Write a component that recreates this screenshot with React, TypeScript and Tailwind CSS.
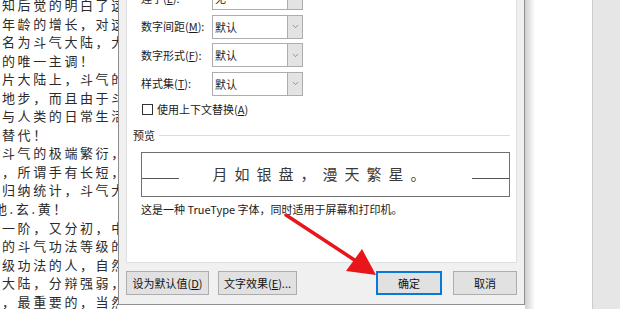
import { ChevronDown } from 'lucide-react';

const novelLines = [
  '知后觉的明白了这',
  '年龄的增长，对这',
  '名为斗气大陆，大',
  '的唯一主调！',
  '片大陆上，斗气的',
  '地步，而且由于斗',
  '与人类的日常生活',
  '替代！',
  '斗气的极端繁衍，',
  '，所谓手有长短，',
  '归纳统计，斗气大',
  '地.玄.黄！',
  '一阶，又分初，中',
  '的斗气功法等级的',
  '级功法的人，自然',
  '大陆，分辩强弱，',
  '，最重要的，当然',
];

const cjk = { fontFamily: '"Noto Sans CJK SC", "Noto Sans", sans-serif' };

const rows = [
  { label: '连字', key: 'L', value: '无' },
  { label: '数字间距', key: 'M', value: '默认' },
  { label: '数字形式', key: 'F', value: '默认' },
  { label: '样式集', key: 'T', value: '默认' },
];

const Select = ({ value }: { value: string }) => (
  <div className="flex h-[24px] w-[91px] border border-[#adadad] bg-white">
    <span className="flex-1 pl-[2px] leading-[22px] text-[#1a1a1a]">{value}</span>
    <div className="flex w-[15px] items-center justify-center border-l border-[#adadad] bg-[#e3e3e3]">
      <ChevronDown size={9} strokeWidth={1.5} className="text-[#555]" />
    </div>
  </div>
);

const Btn = ({ children, w, primary }: { children: React.ReactNode; w: string; primary?: boolean }) => (
  <div
    className={[
      'flex h-[24px] items-center justify-center bg-[#e1e1e1] text-[11px] text-[#111]',
      w,
      primary ? 'border-2 border-[#0a78d7]' : 'border border-[#adadad]',
    ].join(' ')}
  >
    {children}
  </div>
);

export default function App() {
  return (
    <div className="relative flex h-[309px] w-[620px] overflow-hidden bg-white" style={cjk}>
      {/* document text, partly hidden by the dialog */}
      <div className="w-[118px] shrink-0 overflow-hidden pl-[2px]">
        <div className="-mt-[4px]">
          {novelLines.map((l, i) => (
            <div
              key={i}
              className={`h-[18.56px] whitespace-nowrap text-[13px] leading-[18.56px] tracking-[2.6px] text-[#2b2b2b] ${i === 11 ? '-ml-[8px]' : ''}`}
            >
              {l}
            </div>
          ))}
        </div>
      </div>

      {/* dialog */}
      <div className="flex h-[305px] w-[407px] shrink-0 flex-col border-x border-b border-[#8f8f8f] bg-[#f0f0f0] px-[7px] text-[11px]">
        <div className="flex flex-1 flex-col border-x border-b border-[#dfdfdf] bg-white">
          <div className="-mt-[14px] flex flex-col gap-[4.5px] pl-[14px]">
            {rows.map(r => (
              <div key={r.key} className="flex items-center">
                <span className="w-[71px] text-[#1a1a1a]">
                  {r.label}(<u>{r.key}</u>):
                </span>
                <Select value={r.value} />
              </div>
            ))}
          </div>

          <div className="mt-[7px] flex h-[14px] items-center pl-[15px]">
            <div className="h-[11px] w-[11px] border border-[#333] bg-white" />
            <span className="ml-[4px] text-[#1a1a1a]">
              使用上下文替换(<u>A</u>)
            </span>
          </div>

          <div className="mt-[11px] flex h-[16px] items-center pl-[6px] pr-[6px]">
            <span className="text-[#1a1a1a]">预览</span>
            <div className="ml-[4px] h-px flex-1 bg-[#dcdcdc]" />
          </div>

          <div className="ml-[14px] mt-[8px] flex h-[45px] w-[369px] items-center border border-[#707070]">
            <div className="mt-[8px] h-px w-[37px] bg-[#555]" />
            <span className="flex-1 pr-[6px] text-center text-[15px] tracking-[7px] text-[#3a3a3a]">
              月如银盘，漫天繁星。
            </span>
            <div className="mt-[8px] h-px w-[37px] bg-[#555]" />
          </div>

          <div className="ml-[14px] mt-[5px] text-[11px] leading-[14px] text-[#1a1a1a]">
            这是一种 TrueType 字体，同时适用于屏幕和打印机。
          </div>
        </div>

        <div className="flex h-[41px] items-center pb-[1px]">
          <Btn w="w-[83px]">
            设为默认值(<u>D</u>)
          </Btn>
          <div className="ml-[9px]">
            <Btn w="w-[79px]">
              文字效果(<u>E</u>)...
            </Btn>
          </div>
          <div className="flex-1" />
          <Btn w="w-[66px]" primary>
            确定
          </Btn>
          <div className="ml-[11px]">
            <Btn w="w-[64px]">取消</Btn>
          </div>
        </div>
      </div>

      {/* window background on the right */}
      <div className="w-[10px] shrink-0 bg-gradient-to-r from-[#cfcfcf] to-white" />
      <div className="flex-1 bg-white" />
      <div className="w-[28px] shrink-0 border-l border-[#cccccc] bg-[#e6e6e6]" />

      {/* red pointer arrow */}
      <svg className="absolute left-0 top-0" width="620" height="309" viewBox="0 0 620 309">
        <line x1="286" y1="215" x2="356" y2="261" stroke="#e8151b" strokeWidth="3.5" strokeLinecap="round" />
        <polygon points="376,275 346,271 362,249" fill="#e8151b" />
      </svg>
    </div>
  );
}
